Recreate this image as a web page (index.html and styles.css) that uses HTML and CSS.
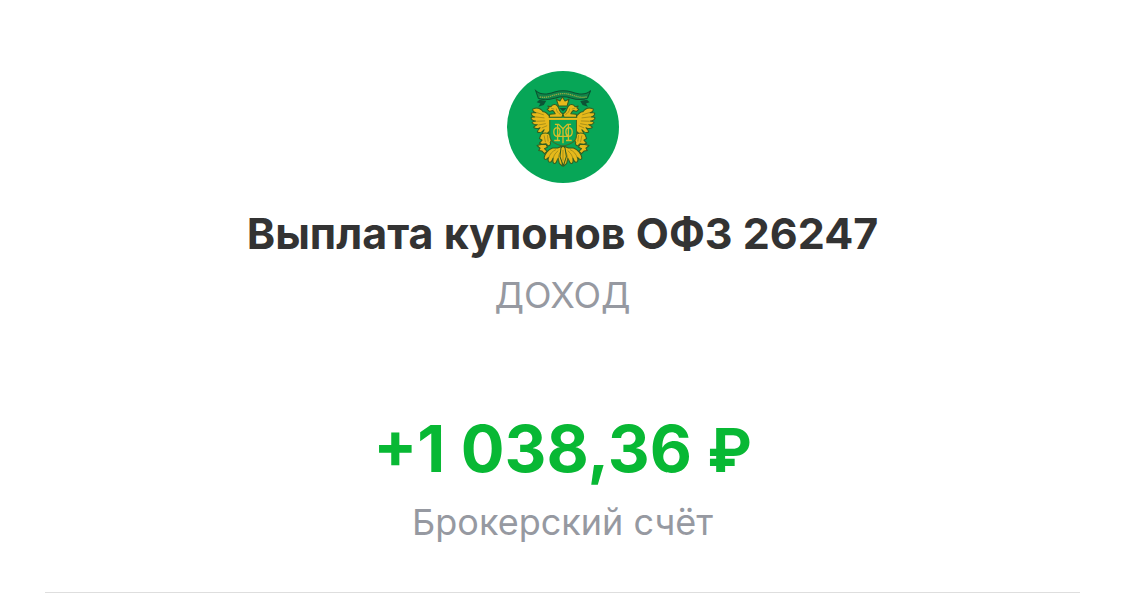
FILE: index.html
```html
<!DOCTYPE html>
<html lang="ru">
<head>
    <meta charset="UTF-8">
    <meta name="viewport" content="width=device-width, initial-scale=1">
    <title>Выплата купонов ОФЗ 26247</title>
    <link rel="stylesheet" href="styles.css">
</head>
<body>

    <main class="operation">

        <!-- эмблема -->
        <svg class="logo" viewBox="23 22 332 332" aria-hidden="true">
            <defs>
                <!-- левая половина орла, правая отражается -->
                <g id="half">
                    <!-- крыло -->
                    <path class="gold" d="M150 157 C143 149 137 141 130 143 C123 133 111 129 99 135 C99 142 104 145 109 146 C102 146 97 145 95 147 C95 154 101 157 106 158 C100 159 95 158 94 161 C96 168 102 170 108 170 C102 172 98 172 97 175 C101 182 107 182 113 181 C107 185 102 186 102 189 C107 194 115 193 121 190 C117 196 112 199 113 203 C121 207 129 201 133 196 C130 203 126 207 128 211 C137 213 144 207 151 198 Z"/>
                    <path class="line" d="M110 145 L132 152 M108 158 L134 161 M110 171 L136 170 M116 182 L138 178 M126 191 L142 184"/>
                    <!-- голова -->
                    <path class="gold" d="M186 159 L148 159 L150 150 L166 149 C163 145 163 141 158 139 L149 142 L142 136 L148 131 L144 126 L153 128 C158 119 168 119 173 126 C179 133 177 145 189 149 Z"/>
                    <path class="line" d="M154 133 L163 135 M169 133 C170 142 174 147 182 151"/>
                    <!-- лапа -->
                    <path class="gold" d="M124 210 C130 204 143 204 149 210 C155 216 156 227 151 234 C154 239 150 244 145 244 L139 238 L127 239 L119 236 L127 227 L119 222 Z"/>
                    <path class="line" d="M133 213 L137 233 M143 212 L145 231"/>
                    <path class="gold" d="M112 243 L124 240 L139 240 L143 248 L134 252 L142 260 L134 267 L126 259 L117 258 L121 251 Z"/>
                    <!-- хвост -->
                    <path class="gold" d="M186 245 L173 250 L158 250 C145 255 134 268 133 280 C135 287 142 284 146 278 C143 287 146 294 152 292 C157 290 157 284 160 280 C157 290 160 298 166 296 C172 292 170 284 175 281 L178 296 L187 304 Z"/>
                    <path class="line" d="M168 255 C157 260 149 269 147 280 M175 258 C165 266 160 275 160 284 M181 262 C176 270 175 279 174 287"/>
                </g>
            </defs>
            <circle class="disc" cx="189" cy="188" r="166"/>
            <path class="ribbon-end" d="M119 107 L111 115 L122 118 L116 128 L132 123 L139 111 Z M260 107 L268 115 L257 118 L263 128 L247 123 L240 111 Z"/>
            <path class="ribbon" d="M108 80 C126 96 145 90 164 84 C181 79 198 79 215 84 C234 90 253 96 271 80 L262 102 C243 111 225 106 212 102 C197 97 182 97 167 102 C150 107 132 111 116 103 Z"/>
            <path class="inscription" d="M120 99 C142 103 153 95 169 92 C185 88 196 88 211 92 C227 96 239 103 259 99"/>
            <use href="#half"/>
            <use href="#half" transform="translate(378 0) scale(-1 1)"/>
            <path class="gold" d="M176 126 L169 105 L180 111 L187 99 L195 111 L207 105 L201 126 Z"/>
            <path class="shadow" d="M178 132 L189 141 L200 132 Z"/>
            <!-- щит -->
            <path class="shield" d="M150 166 H229 V213 C229 230 213 239 189 245 C165 239 150 230 150 213 Z"/>
            <path class="bar" d="M146 164 H232"/>
            <path class="monogram" d="M165 180 H176 L189 193 L202 180 H213 M173 180 V228 M205 180 V228 M163 228 H180 M198 228 H215 M189 192 V236 M173 190 C158 190 158 216 173 216 H205 C220 216 220 190 205 190 M173 190 C183 192 183 211 173 216 M205 190 C195 192 195 211 205 216"/>
            <path class="gold" d="M183 250 L189 244 L195 250 L199 276 L190 303 L180 276 Z"/>
            <path class="line" d="M189 256 V288"/>
        </svg>

        <h1 class="title">Выплата купонов ОФЗ 26247</h1>
        <p class="type">ДОХОД</p>

        <p class="amount">+1 038,36 <span class="currency">₽</span></p>
        <p class="account">Брокерский счёт</p>

        <hr class="divider">
    </main>

</body>
</html>
```

FILE: styles.css
```css
body {
    margin: 0;
    background-color: #fff;
    font-family: Inter, "Liberation Sans", sans-serif;
    text-align: center;
}

.operation {
    padding: 71px 45px 0;
}

/* эмблема */
.logo {
    display: block;
    width: 112px;
    height: 112px;
    margin: 0 auto;
}

.disc {
    fill: #07a657;
}

.gold {
    fill: #e6b91b;
    stroke: #315d22;
    stroke-width: 3;
    stroke-linejoin: round;
}

.line {
    fill: none;
    stroke: #8a7c18;
    stroke-width: 2;
}

.ribbon {
    fill: #108449;
    stroke: #0b5130;
    stroke-width: 3;
}

.ribbon-end,
.shadow {
    fill: #0b5435;
}

.inscription {
    fill: none;
    stroke: #91a941;
    stroke-width: 4;
    stroke-dasharray: 4 2;
}

.shield {
    fill: #07a657;
    stroke: #426d22;
    stroke-width: 3;
}

.bar {
    fill: none;
    stroke: #e8bd20;
    stroke-width: 6;
}

.monogram {
    fill: none;
    stroke: #d6bd29;
    stroke-width: 4;
}

/* тексты */
.title {
    margin: 24px 0 0;
    color: #333;
    font-size: 43px;
    line-height: 52px;
    font-weight: 700;
}

.type,
.account {
    margin: 0;
    color: #9699a1;
    font-size: 36px;
    line-height: 48px;
}

.type {
    margin-top: 12px;
}

.amount {
    margin: 90px 0 0;
    color: #08b834;
    font-size: 65px;
    line-height: 80px;
    font-weight: 700;
}

.currency {
    font-size: 60px;
}

.account {
    margin-top: 8px;
}

.divider {
    height: 1px;
    margin: 46px 0 0;
    border: 0;
    background-color: #dedede;
}
```
